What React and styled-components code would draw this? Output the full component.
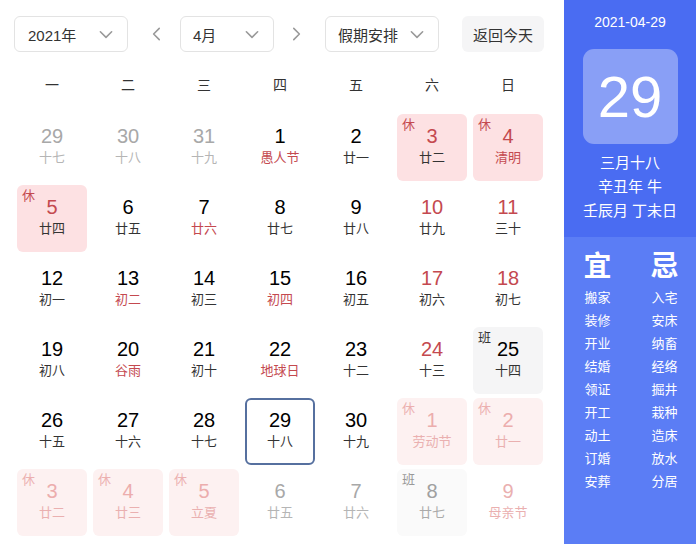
import React from "react";
import styled, { createGlobalStyle } from "styled-components";

const Global = createGlobalStyle`
  html, body { margin: 0; padding: 0; background: #fff; }
  body { font-family: Arial, "Liberation Sans", "Noto Sans CJK SC", sans-serif; }
  * { box-sizing: border-box; }
`;

const Page = styled.div`
  width: 696px;
  height: 544px;
  display: flex;
  overflow: hidden;
`;

const Main = styled.div`
  width: 564px;
  padding: 16px 0 0 14px;
`;

const Toolbar = styled.div`
  display: flex;
  align-items: center;
  height: 36px;
`;

const Select = styled.div`
  width: ${(p) => p.$w}px;
  height: 36px;
  border: 1px solid #e3e3e3;
  border-radius: 6px;
  display: flex;
  align-items: center;
  justify-content: space-between;
  padding: 0 12px 0 ${(p) => p.$pl || 12}px;
  font-size: 15px;
  color: #333;
  margin-left: ${(p) => p.$ml || 0}px;
`;

const Arrow = styled.div`
  width: 18px;
  display: flex;
  justify-content: center;
  margin-left: ${(p) => p.$ml}px;
`;

const TodayBtn = styled.div`
  margin-left: 23px;
  width: 82px;
  height: 36px;
  border-radius: 6px;
  background: #f5f5f6;
  display: flex;
  align-items: center;
  justify-content: center;
  font-size: 15px;
  color: #333;
`;

const Grid = styled.div`
  display: grid;
  grid-template-columns: repeat(7, 70px);
  column-gap: 6px;
  padding-left: 3px;
`;

const WeekRow = styled(Grid)`
  height: 62px;
  align-items: center;
  padding-top: 2px;
`;

const WeekDay = styled.div`
  text-align: center;
  font-size: 14px;
  color: #333;
`;

const Days = styled(Grid)`
  grid-auto-rows: 67px;
  row-gap: 4px;
`;

const palette = {
  normal: { bg: "transparent", num: "#000", lunar: "#333" },
  weekend: { bg: "transparent", num: "#c4494f", lunar: "#333" },
  prev: { bg: "transparent", num: "#a8a8a8", lunar: "#b5b5b5" },
  rest: { bg: "#fde1e3", num: "#c4494f", lunar: "#c4494f" },
  restDay: { bg: "#fde1e3", num: "#c4494f", lunar: "#333" },
  work: { bg: "#f5f5f6", num: "#000", lunar: "#333" },
  nextRest: { bg: "#fdf1f1", num: "#ecadad", lunar: "#eab0b0" },
  nextWork: { bg: "#fafafa", num: "#a0a0a0", lunar: "#aaa" },
  next: { bg: "transparent", num: "#a8a8a8", lunar: "#b5b5b5" },
  nextFest: { bg: "transparent", num: "#eab0b0", lunar: "#eab0b0" },
};

const Cell = styled.div`
  position: relative;
  border-radius: 6px;
  background: ${(p) => palette[p.$kind].bg};
  border: ${(p) => (p.$today ? "2px solid #56709f" : "2px solid transparent")};
  display: flex;
  flex-direction: column;
  align-items: center;
  padding-top: 8px;
`;

const Num = styled.div`
  font-size: 20px;
  line-height: 24px;
  color: ${(p) => palette[p.$kind].num};
`;

const Lunar = styled.div`
  margin-top: 1px;
  font-size: 13px;
  line-height: 18px;
  color: ${(p) => (p.$fest ? (p.$kind.startsWith("next") ? palette[p.$kind].lunar : "#c4494f") : palette[p.$kind].lunar)};
`;

const Tag = styled.div`
  position: absolute;
  left: 3px;
  top: 1px;
  font-size: 13px;
  line-height: 16px;
  color: ${(p) => (p.$faded ? (p.$work ? "#999" : "#ecb0b0") : p.$work ? "#333" : "#c4494f")};
`;

const Side = styled.div`
  width: 132px;
  display: flex;
  flex-direction: column;
  background: #5b7df5;
`;

const SideTop = styled.div`
  height: 237px;
  background: #4a6cf2;
  display: flex;
  flex-direction: column;
  align-items: center;
  color: #fff;
  padding-top: 13px;
`;

const DateText = styled.div`
  font-size: 14px;
  line-height: 18px;
`;

const BigBox = styled.div`
  margin-top: 18px;
  width: 95px;
  height: 95px;
  border-radius: 11px;
  background: rgba(255, 255, 255, 0.35);
  display: flex;
  align-items: center;
  justify-content: center;
  font-size: 58px;
  color: #fff;
`;

const Lines = styled.div`
  margin-top: 7px;
  display: flex;
  flex-direction: column;
  align-items: center;
  font-size: 15px;
  line-height: 24px;
`;

const SideBottom = styled.div`
  display: grid;
  grid-template-columns: 67px 67px;
  padding-top: 13px;
  color: #fff;
`;

const Col = styled.div`
  display: flex;
  flex-direction: column;
  align-items: center;
`;

const Big = styled.div`
  font-size: 28px;
  font-weight: bold;
  line-height: 34px;
  margin-bottom: 2px;
`;

const Item = styled.div`
  font-size: 13px;
  line-height: 23px;
`;

const Chevron = ({ dir, color = "#999", size = 16 }) => {
  const d = {
    down: "M3 6 L8 11 L13 6",
    left: "M10 3 L5 8 L10 13",
    right: "M6 3 L11 8 L6 13",
  }[dir];
  return (
    <svg width={size} height={size} viewBox="0 0 16 16" fill="none">
      <path d={d} stroke={color} strokeWidth="1.4" strokeLinecap="round" strokeLinejoin="round" />
    </svg>
  );
};

const rows = [
  [
    { n: 29, l: "十七", k: "prev" },
    { n: 30, l: "十八", k: "prev" },
    { n: 31, l: "十九", k: "prev" },
    { n: 1, l: "愚人节", k: "normal", f: true },
    { n: 2, l: "廿一", k: "normal" },
    { n: 3, l: "廿二", k: "restDay", t: "休" },
    { n: 4, l: "清明", k: "rest", t: "休" },
  ],
  [
    { n: 5, l: "廿四", k: "restDay", t: "休" },
    { n: 6, l: "廿五", k: "normal" },
    { n: 7, l: "廿六", k: "normal", f: true },
    { n: 8, l: "廿七", k: "normal" },
    { n: 9, l: "廿八", k: "normal" },
    { n: 10, l: "廿九", k: "weekend" },
    { n: 11, l: "三十", k: "weekend" },
  ],
  [
    { n: 12, l: "初一", k: "normal" },
    { n: 13, l: "初二", k: "normal", f: true },
    { n: 14, l: "初三", k: "normal" },
    { n: 15, l: "初四", k: "normal", f: true },
    { n: 16, l: "初五", k: "normal" },
    { n: 17, l: "初六", k: "weekend" },
    { n: 18, l: "初七", k: "weekend" },
  ],
  [
    { n: 19, l: "初八", k: "normal" },
    { n: 20, l: "谷雨", k: "normal", f: true },
    { n: 21, l: "初十", k: "normal" },
    { n: 22, l: "地球日", k: "normal", f: true },
    { n: 23, l: "十二", k: "normal" },
    { n: 24, l: "十三", k: "weekend" },
    { n: 25, l: "十四", k: "work", t: "班" },
  ],
  [
    { n: 26, l: "十五", k: "normal" },
    { n: 27, l: "十六", k: "normal" },
    { n: 28, l: "十七", k: "normal" },
    { n: 29, l: "十八", k: "normal", today: true },
    { n: 30, l: "十九", k: "normal" },
    { n: 1, l: "劳动节", k: "nextRest", t: "休", fade: true },
    { n: 2, l: "廿一", k: "nextRest", t: "休", fade: true },
  ],
  [
    { n: 3, l: "廿二", k: "nextRest", t: "休", fade: true },
    { n: 4, l: "廿三", k: "nextRest", t: "休", fade: true },
    { n: 5, l: "立夏", k: "nextRest", t: "休", fade: true },
    { n: 6, l: "廿五", k: "next" },
    { n: 7, l: "廿六", k: "next" },
    { n: 8, l: "廿七", k: "nextWork", t: "班", fade: true },
    { n: 9, l: "母亲节", k: "nextFest" },
  ],
];

const yi = ["搬家", "装修", "开业", "结婚", "领证", "开工", "动土", "订婚", "安葬"];
const ji = ["入宅", "安床", "纳畜", "经络", "掘井", "栽种", "造床", "放水", "分居"];

export default function App() {
  return (
    <Page>
      <Global />
      <Main>
        <Toolbar>
          <Select $w={114} $pl={13}>
            <span>2021年</span>
            <Chevron dir="down" size={18} />
          </Select>
          <Arrow $ml={20}>
            <Chevron dir="left" size={18} />
          </Arrow>
          <Select $w={94} $ml={14}>
            <span>4月</span>
            <Chevron dir="down" size={18} />
          </Select>
          <Arrow $ml={13}>
            <Chevron dir="right" size={18} />
          </Arrow>
          <Select $w={114} $ml={20}>
            <span>假期安排</span>
            <Chevron dir="down" size={18} />
          </Select>
          <TodayBtn>返回今天</TodayBtn>
        </Toolbar>
        <WeekRow>
          {["一", "二", "三", "四", "五", "六", "日"].map((w) => (
            <WeekDay key={w}>{w}</WeekDay>
          ))}
        </WeekRow>
        <Days>
          {rows.flat().map((d, i) => (
            <Cell key={i} $kind={d.k} $today={d.today}>
              {d.t && (
                <Tag $work={d.t === "班"} $faded={d.fade}>
                  {d.t}
                </Tag>
              )}
              <Num $kind={d.k}>{d.n}</Num>
              <Lunar $kind={d.k} $fest={d.f || d.k === "nextFest"}>
                {d.l}
              </Lunar>
            </Cell>
          ))}
        </Days>
      </Main>
      <Side>
        <SideTop>
          <DateText>2021-04-29</DateText>
          <BigBox>29</BigBox>
          <Lines>
            <div>三月十八</div>
            <div>辛丑年 牛</div>
            <div>壬辰月 丁未日</div>
          </Lines>
        </SideTop>
        <SideBottom>
          <Col>
            <Big>宜</Big>
            {yi.map((x) => (
              <Item key={x}>{x}</Item>
            ))}
          </Col>
          <Col>
            <Big>忌</Big>
            {ji.map((x) => (
              <Item key={x}>{x}</Item>
            ))}
          </Col>
        </SideBottom>
      </Side>
    </Page>
  );
}
